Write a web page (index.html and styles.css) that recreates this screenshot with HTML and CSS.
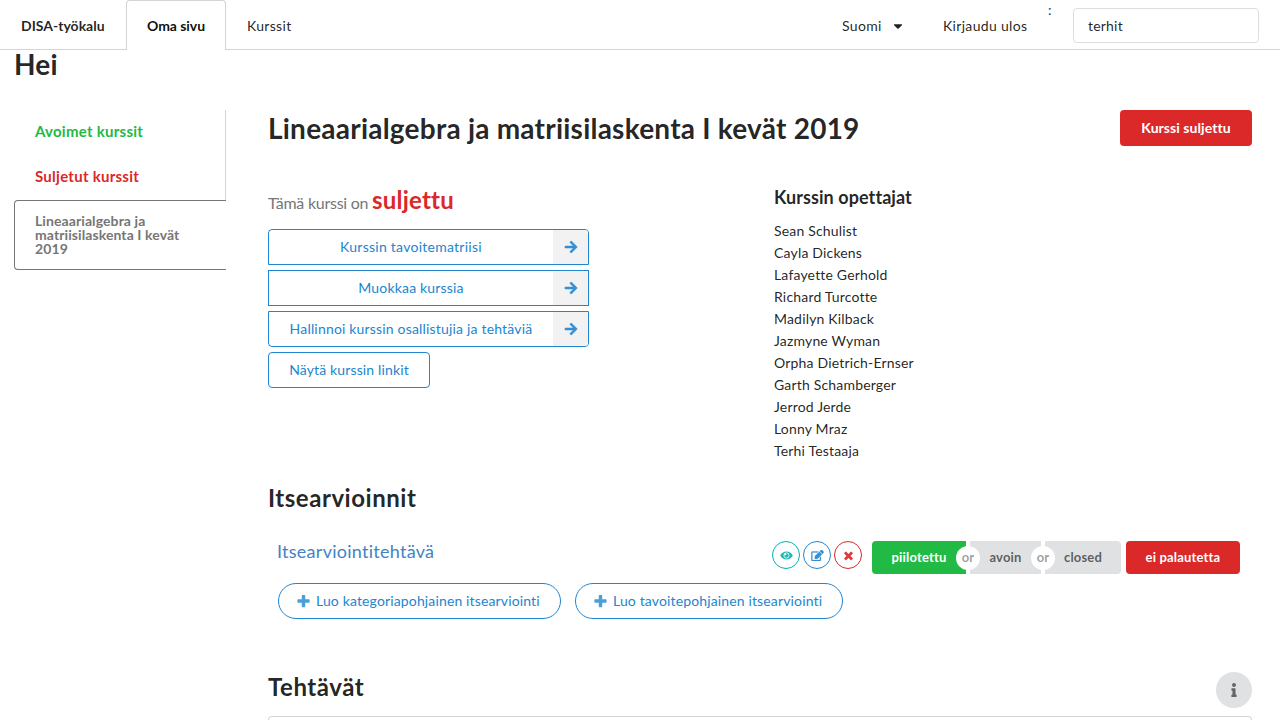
FILE: index.html
```html
<!DOCTYPE html>
<html lang="fi">
<head>
<meta charset="utf-8">
<title>DISA-työkalu</title>
<link rel="stylesheet" href="styles.css">
</head>
<body>
<svg class="defs" width="0" height="0">
  <symbol id="arrow" viewBox="0 0 448 512"><path d="M190.5 66.9l22.2-22.2c9.4-9.4 24.6-9.4 33.9 0L441 239c9.4 9.4 9.4 24.6 0 33.9L246.6 467.3c-9.4 9.4-24.6 9.4-33.9 0l-22.2-22.2c-9.5-9.5-9.3-25 .4-34.3L311.4 296H24c-13.3 0-24-10.7-24-24v-32c0-13.3 10.7-24 24-24h287.4L190.9 101.2c-9.8-9.3-10-24.8-.4-34.3z"/></symbol>
  <symbol id="plus" viewBox="0 0 448 512"><path d="M448 294.2v-76.4c0-13.3-10.7-24-24-24H286.2V56c0-13.3-10.7-24-24-24h-76.4c-13.3 0-24 10.7-24 24v137.8H24c-13.3 0-24 10.7-24 24v76.4c0 13.3 10.7 24 24 24h137.8V456c0 13.3 10.7 24 24 24h76.4c13.3 0 24-10.7 24-24V318.2H424c13.3 0 24-10.7 24-24z"/></symbol>
</svg>
<nav class="menu">
  <a class="item brand">DISA-työkalu</a>
  <a class="item active">Oma sivu</a>
  <a class="item">Kurssit</a>
  <div class="menu-right">
    <a class="item lang">Suomi<svg class="caret" viewBox="0 0 320 512"><path d="M31.3 192h257.3c17.8 0 26.7 21.5 14.1 34.1L174.1 354.8c-7.8 7.8-20.5 7.8-28.3 0L17.2 226.1C4.6 213.5 13.5 192 31.3 192z"/></svg></a>
    <a class="item logout">Kirjaudu ulos</a>
    <span class="colon">:</span>
    <div class="search"><input class="input" type="text" value="terhit"></div>
  </div>
</nav>
<h1 class="greeting">Hei</h1>
<div class="page">
  <aside class="tabs">
    <a class="tab green">Avoimet kurssit</a>
    <a class="tab red">Suljetut kurssit</a>
    <a class="tab current">Lineaarialgebra ja matriisilaskenta I kevät 2019</a>
  </aside>
  <main class="content">
    <header class="course-head">
      <h1 class="title">Lineaarialgebra ja matriisilaskenta I kevät 2019</h1>
      <button class="btn danger">Kurssi suljettu</button>
    </header>
    <div class="columns">
      <section>
        <p class="status">Tämä kurssi on <strong class="closed">suljettu</strong></p>
        <div class="actions">
          <button class="btn outline labeled first"><span class="label">Kurssin tavoitematriisi</span><span class="side"><svg class="arrow"><use href="#arrow"/></svg></span></button>
          <button class="btn outline labeled middle"><span class="label">Muokkaa kurssia</span><span class="side"><svg class="arrow"><use href="#arrow"/></svg></span></button>
          <button class="btn outline labeled last"><span class="label">Hallinnoi kurssin osallistujia ja tehtäviä</span><span class="side"><svg class="arrow"><use href="#arrow"/></svg></span></button>
          <button class="btn outline links">Näytä kurssin linkit</button>
        </div>
      </section>
      <section>
        <h3 class="teachers-title">Kurssin opettajat</h3>
        <ul class="teachers">
          <li>Sean Schulist</li><li>Cayla Dickens</li><li>Lafayette Gerhold</li><li>Richard Turcotte</li><li>Madilyn Kilback</li><li>Jazmyne Wyman</li><li>Orpha Dietrich-Ernser</li><li>Garth Schamberger</li><li>Jerrod Jerde</li><li>Lonny Mraz</li><li>Terhi Testaaja</li>
        </ul>
      </section>
    </div>
    <h2 class="section-title">Itsearvioinnit</h2>
    <div class="assessment">
      <a class="name">Itsearviointitehtävä</a>
      <div class="rounds">
        <button class="round teal"><svg class="ico" viewBox="0 0 576 512"><path d="M569.354 231.631C512.969 135.949 407.81 72 288 72 168.14 72 63.004 135.994 6.646 231.631a47.999 47.999 0 0 0 0 48.739C63.031 376.051 168.19 440 288 440c119.86 0 224.996-63.994 281.354-159.631a47.997 47.997 0 0 0 0-48.738zM288 392c-75.162 0-136-60.827-136-136 0-75.162 60.826-136 136-136 75.162 0 136 60.826 136 136 0 75.162-60.826 136-136 136zm104-136c0 57.438-46.562 104-104 104s-104-46.562-104-104c0-17.708 4.431-34.379 12.236-48.973l-.001.032c0 23.651 19.173 42.823 42.824 42.823s42.824-19.173 42.824-42.823c0-23.651-19.173-42.824-42.824-42.824l-.032.001C253.621 156.431 270.292 152 288 152c57.438 0 104 46.562 104 104z"/></svg></button>
        <button class="round blue"><svg class="ico edit" viewBox="0 0 576 512"><path d="M402.3 344.9l32-32c5-5 13.7-1.5 13.7 5.7V464c0 26.5-21.5 48-48 48H48c-26.5 0-48-21.5-48-48V112c0-26.5 21.5-48 48-48h273.5c7.1 0 10.7 8.6 5.7 13.7l-32 32c-1.5 1.5-3.5 2.3-5.7 2.3H48v352h352V350.5c0-2.1.8-4.1 2.3-5.6z"/><path d="M497.9 204.1L296.3 405.7l-90.4 10c-26.2 2.9-48.5-19.2-45.6-45.6l10-90.4L371.9 78.1zM520 182L394 56l38.9-38.9c22.9-22.9 59.9-22.9 82.7 0l43.2 43.2c22.9 22.9 22.9 60 .1 82.8z"/></svg></button>
        <button class="round crimson"><svg class="ico" viewBox="0 0 1792 1792"><path d="M1490 1322q0 40-28 68l-136 136q-28 28-68 28t-68-28l-294-294-294 294q-28 28-68 28t-68-28l-136-136q-28-28-28-68t28-68l294-294-294-294q-28-28-28-68t28-68l136-136q28-28 68-28t68 28l294 294 294-294q28-28 68-28t68 28l136 136q28 28 28 68t-28 68l-294 294 294 294q28 28 28 68z"/></svg></button>
      </div>
      <div class="choices">
        <button class="small on">piilotettu</button><span class="or">or</span><button class="small mid">avoin</button><span class="or">or</span><button class="small end">closed</button>
      </div>
      <button class="small danger feedback">ei palautetta</button>
    </div>
    <div class="create">
      <button class="btn outline pill category"><svg class="plus"><use href="#plus"/></svg>Luo kategoriapohjainen itsearviointi</button>
      <button class="btn outline pill target"><svg class="plus"><use href="#plus"/></svg>Luo tavoitepohjainen itsearviointi</button>
    </div>
    <div class="tasks-head">
      <h2 class="tasks-title">Tehtävät</h2>
      <button class="info"><svg class="info-icon" viewBox="0 0 192 512"><path d="M20 424.229h20V279.771H20c-11.046 0-20-8.954-20-20V212c0-11.046 8.954-20 20-20h112c11.046 0 20 8.954 20 20v212.229h20c11.046 0 20 8.954 20 20V492c0 11.046-8.954 20-20 20H20c-11.046 0-20-8.954-20-20v-47.771c0-11.046 8.954-20 20-20zM96 0C56.235 0 24 32.235 24 72s32.235 72 72 72 72-32.235 72-72S135.764 0 96 0z"/></svg></button>
    </div>
    <div class="card"></div>
  </main>
</div>
</body>
</html>
```
FILE: styles.css
```css
* { box-sizing: border-box; }
html, body { height: 100%; overflow: hidden; }
body { margin: 0; font: 14px/20px Lato, sans-serif; font-variant-ligatures: none; color: rgba(0,0,0,.87); background: #fff; }
h1, h2, h3, p, ul { margin: 0; padding: 0; }
button, input { font-family: inherit; font-variant-ligatures: none; margin: 0; }
svg { fill: currentColor; display: block; flex: none; }
.defs { position: absolute; }

.menu { display: flex; height: 50px; border-bottom: 1px solid #d4d4d5; }
.item { display: flex; align-items: center; height: 50px; padding: 2px 21px 0; line-height: 14px; white-space: nowrap; letter-spacing: .32px; }
.brand { font-weight: 700; width: 126px; letter-spacing: 0; }
.active { width: 100px; padding: 0 20px; font-weight: 700; letter-spacing: -.05px; color: rgba(0,0,0,.95); background: #fff; border: 1px solid #d4d4d5; border-bottom: 0; border-radius: 4px 4px 0 0; }
.menu-right { display: flex; margin-left: auto; }
.lang { width: 80px; padding: 2px 0 0; }
.logout { width: 126px; }
.caret { width: 12px; height: 14px; margin-left: 10px; }
.colon { width: 25px; color: #1e3a5f; }
.search { padding: 8px 21px 0 0; }
.input { display: block; width: 186px; height: 35px; padding: 0 14px; font-size: 14px; letter-spacing: .2px; color: rgba(0,0,0,.87); border: 1px solid #dededf; border-radius: 4px; outline: 0; }

.greeting { height: 60px; padding: 0 14px; font-size: 28px; line-height: 28px; font-weight: 700; letter-spacing: .2px; }
.page { display: flex; padding: 0 28px 0 14px; }
.tabs { width: 212px; }
.tab { display: flex; align-items: center; height: 45px; padding: 0 0 2px 21px; font-size: 15px; font-weight: 700; line-height: 15px; letter-spacing: .26px; border-right: 1px solid #d4d4d5; }
.green { color: #21ba45; }
.red { color: #db2828; }
.current { height: 70px; padding: 0 20px; font-size: 14px; line-height: 14px; letter-spacing: .09px; color: #767676; border: 1px solid #767676; border-right: 0; border-radius: 4px 0 0 4px; }

.content { flex: 1; margin-left: 42px; }
.course-head { display: flex; justify-content: space-between; height: 76px; }
.title { font-size: 28px; line-height: 36px; font-weight: 700; letter-spacing: .23px; }
.btn { height: 36px; padding: 0; border: 0; border-radius: 4px; font-size: 14px; line-height: 14px; letter-spacing: .14px; }
.danger { color: #fff; background: #db2828; font-weight: 700; }
.course-head .btn { width: 132px; letter-spacing: .06px; }
.columns { display: grid; grid-template-columns: 506px 1fr; height: 294px; }
.status { height: 43px; font-size: 16px; line-height: 28px; letter-spacing: -.25px; color: #767676; }
.closed { font-size: 24px; letter-spacing: .2px; color: #db2828; }
.actions { display: flex; flex-direction: column; gap: 5px; }
.outline { color: #2185d0; background: #fff; border: 1px solid #2185d0; }
.labeled { display: flex; width: 321px; overflow: hidden; letter-spacing: .18px; }
.label { flex: 1; align-self: center; text-align: center; }
.side { display: grid; place-items: center; width: 35px; height: 34px; padding-left: 1px; background: #f2f2f2; }
.arrow { width: 14px; height: 14px; opacity: .9; stroke: currentColor; stroke-width: 16; }
.first { border-radius: 4px 4px 0 0; letter-spacing: .26px; }
.middle { border-radius: 0; }
.last { border-radius: 0 0 4px 4px; }
.links { width: 162px; }
.teachers-title { height: 34px; font-size: 18px; line-height: 22px; font-weight: 700; letter-spacing: .08px; }
.teachers { list-style: none; line-height: 22px; letter-spacing: .18px; }

.section-title { height: 61px; font-size: 24px; line-height: 36px; font-weight: 700; letter-spacing: .53px; }
.assessment { display: flex; height: 42px; padding-right: 12px; }
.name { flex: 1; padding-left: 9px; font-size: 18px; line-height: 20px; letter-spacing: .27px; color: #4183c4; }
.rounds { display: flex; gap: 3px; margin-right: 10px; }
.round { display: grid; place-items: center; width: 28px; height: 28px; padding: 1px 0 0; border: 1px solid currentColor; border-radius: 50%; background: #fff; }
.teal { color: #00b5ad; }
.blue { color: #2185d0; }
.crimson { color: #db2828; }
.ico { width: 13px; height: 11px; opacity: .9; }
.edit { stroke: currentColor; stroke-width: 12; }
.crimson .ico { height: 13px; }
.choices { display: flex; }
.small { height: 33px; padding: 0; border: 0; border-radius: 4px; font-size: 13px; line-height: 13px; font-weight: 700; letter-spacing: .18px; }
.on { width: 94px; color: #fff; background: #21ba45; border-radius: 4px 0 0 4px; }
.mid, .end { color: rgba(0,0,0,.6); background: #e0e1e2; border-radius: 0; }
.mid { width: 71px; }
.end { width: 76px; border-radius: 0 4px 4px 0; }
.or { position: relative; z-index: 1; width: 24px; height: 24px; margin: 5px -10px 0; border-radius: 50%; background: #fff; color: rgba(0,0,0,.4); font-size: 13px; line-height: 23px; font-weight: 700; text-align: center; }
.feedback { width: 114px; margin-left: 5px; }
.create { display: flex; gap: 14px; height: 86px; padding-left: 10px; }
.pill { display: flex; align-items: center; padding-left: 18px; border-radius: 36px; white-space: nowrap; }
.category { width: 283px; }
.target { width: 268px; }
.plus { width: 13px; height: 14px; margin-right: 6px; opacity: .8; }
.tasks-head { display: flex; justify-content: space-between; height: 47px; padding-top: 3px; }
.tasks-title { font-size: 24px; line-height: 30px; font-weight: 700; letter-spacing: .55px; }
.info { display: grid; place-items: center; width: 36px; height: 36px; padding: 0; border: 0; border-radius: 50%; background: #e0e1e2; color: rgba(0,0,0,.55); }
.info-icon { width: 6px; height: 14px; }
.card { height: 4px; border: 1px solid #d4d4d5; border-bottom: 0; border-radius: 4px 4px 0 0; }
```
